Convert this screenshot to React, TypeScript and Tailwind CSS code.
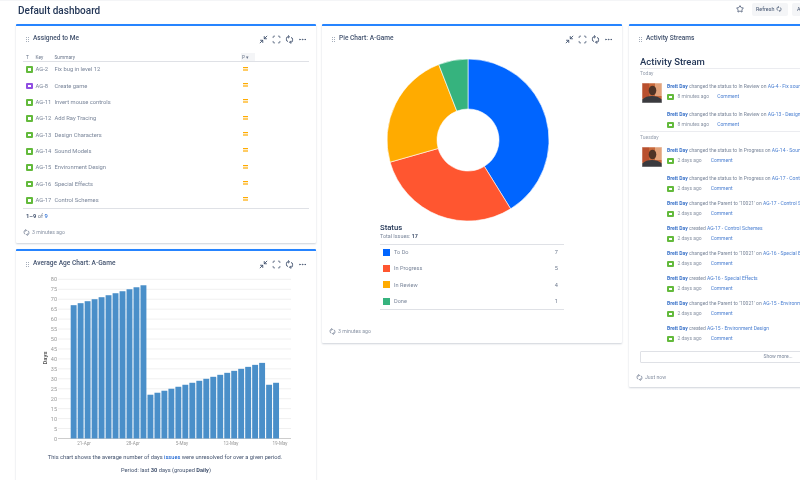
import { Minimize2, Scan, Ellipsis, Star } from "lucide-react";

const rows: [string, string, boolean?][] = [
  ["AG-2", "Fix bug in level 12"],
  ["AG-8", "Create game", true],
  ["AG-11", "Invert mouse controls"],
  ["AG-12", "Add Ray Tracing"],
  ["AG-13", "Design Characters"],
  ["AG-14", "Sound Models"],
  ["AG-15", "Environment Design"],
  ["AG-16", "Special Effects"],
  ["AG-17", "Control Schemes"],
];

const bars = [67, 68, 69, 70, 71, 72, 73, 74, 75, 76, 77, 22, 23, 24, 25, 26, 27, 28, 29, 30, 31, 32, 33, 34, 35, 36, 37, 38, 27, 28];

function Handle() {
  return (
    <span className="grid grid-cols-2 gap-[1px] w-[3px] mr-[4px]">
      {[0, 1, 2, 3, 4, 5].map((i) => (
        <span key={i} className="w-[1px] h-[1px] bg-[#a5adba]" />
      ))}
    </span>
  );
}

function Sync({ size = 9, className = "" }: { size?: number; className?: string }) {
  return (
    <svg width={size} height={size} viewBox="0 0 10 10" fill="none" stroke="currentColor" strokeWidth="1.1" className={className}>
      <path d="M4.6 2 H3.4 Q1.6 2 1.6 3.8 V5.2 Q1.6 7 3.2 7.2" />
      <path d="M3.4 0.4 L5 2 L3.4 3.6" />
      <path d="M5.4 8 H6.6 Q8.4 8 8.4 6.2 V4.8 Q8.4 3 6.8 2.8" />
      <path d="M6.6 9.6 L5 8 L6.6 6.4" />
    </svg>
  );
}

function Tools() {
  return (
    <div className="ml-auto flex items-center gap-[4px] text-[#42526e]">
      <Minimize2 size={9} strokeWidth={2.4} />
      <Scan size={9} strokeWidth={2} />
      <Sync />
      <Ellipsis size={9} strokeWidth={2} />
    </div>
  );
}

function CardTitle({ title, tools = true }: { title: string; tools?: boolean }) {
  return (
    <div className="flex items-center h-[10px] pl-[10px] pr-[9px] text-[6.6px] font-medium text-[#42526e]">
      <Handle />
      <span>{title}</span>
      {tools && <Tools />}
    </div>
  );
}

function Updated({ text }: { text: string }) {
  return (
    <div className="flex items-center gap-[2px] text-[5.2px] leading-[9px] text-[#8993a4]">
      <Sync size={7} className="text-[#6b778c]" />
      <span>{text}</span>
    </div>
  );
}

function IssueIcon({ purple = false }: { purple?: boolean }) {
  return (
    <span className={`w-[6.5px] h-[6.5px] rounded-[1px] flex items-center justify-center shrink-0 ${purple ? "bg-[#904ee2]" : "bg-[#63ba3c]"}`}>
      <span className="w-[2.5px] h-[2.5px] bg-white" />
    </span>
  );
}

function Priority() {
  return (
    <svg width="5" height="4" viewBox="0 0 5 4" className="block">
      <rect x="0" y="0" width="5" height="1.2" fill="#ffab00" />
      <rect x="0" y="2.4" width="5" height="1.2" fill="#ffab00" />
    </svg>
  );
}

function AssignedCard() {
  return (
    <section className="h-[219px] bg-white border-t-2 border-t-[#2684ff] rounded-[1px] shadow-[0_1px_2px_rgba(9,30,66,0.2)] pt-[8px]">
      <CardTitle title="Assigned to Me" />
      <div className="mx-[7px] mt-[10px] text-[5.8px] text-[#6b778c]">
        <div className="flex items-center h-[7.5px] border-b border-[#dfe1e6] pl-[3px] text-[4.8px]">
          <span className="w-[9.5px]">T</span>
          <span className="w-[19px]">Key</span>
          <span className="w-[186.5px]">Summary</span>
          <span className="bg-[#f4f5f7] w-[14px] h-[8px] pl-[1px] flex items-center">P ▾</span>
        </div>
        {rows.map(([key, summary, purple]) => (
          <div key={key} className="flex items-center h-[16.33px] pl-[3px]">
            <span className="w-[9.5px]">
              <IssueIcon purple={purple} />
            </span>
            <span className="w-[19px] text-[#7a869a]">{key}</span>
            <span className="w-[188.5px] text-[#7a869a]">{summary}</span>
            <span className="-mt-[2px]">
              <Priority />
            </span>
          </div>
        ))}
        <div className="border-t border-[#dfe1e6] pt-[3px] pl-[3px] h-[11px] text-[#6b778c]">
          <span className="font-bold text-[#42526e]">1–9</span> of <span className="text-[#0052cc]">9</span>
        </div>
      </div>
      <div className="pl-[7px] mt-[8.5px]">
        <Updated text="3 minutes ago" />
      </div>
    </section>
  );
}

function AgeChart() {
  const y = (v: number) => 438.5 - v * 1.99;
  const ticks = Array.from({ length: 17 }, (_, i) => i * 5);
  return (
    <svg width="300" height="183" viewBox="16 270 300 183" className="block">
      {ticks.map((t) => (
        <g key={t}>
          <line x1="58" x2="291" y1={y(t)} y2={y(t)} stroke={t === 0 ? "#c0c0c0" : "#f0f0f0"} strokeWidth={t === 0 ? 0.8 : 1} />
          <text x="57" y={y(t) + 2} textAnchor="end" fontSize="5.5" fill="#999999">{t}</text>
        </g>
      ))}
      {bars.map((b, i) => (
        <rect key={i} x={70.7 + i * 6.98} y={y(b)} width="5.9" height={b * 1.99} fill="#4a8fc9" />
      ))}
      {[["21-Apr", 84], ["28-Apr", 133], ["5-May", 182], ["12-May", 231], ["19-May", 280]].map(([l, x]) => (
        <text key={l} x={x} y="445" textAnchor="middle" fontSize="4.6" fill="#999999">{l}</text>
      ))}
      <text transform="translate(47,358) rotate(-90)" textAnchor="middle" fontSize="6" fontWeight="600" fill="#555555">Days</text>
    </svg>
  );
}

function AgeCard() {
  return (
    <section className="h-[240px] bg-white border-t-2 border-t-[#2684ff] rounded-[1px] shadow-[0_1px_2px_rgba(9,30,66,0.2)] pt-[8px]">
      <CardTitle title="Average Age Chart: A-Game" />
      <div className="mt-[1px]">
        <AgeChart />
      </div>
      <p className="text-center text-[5.7px] text-[#42526e] pr-[2px]">
        This chart shows the average number of days <span className="text-[#0052cc]">issues</span> were unresolved for over a given period.
      </p>
      <p className="text-center text-[5.7px] text-[#42526e] mt-[4px]">
        Period: last <b>30</b> days (grouped <b>Daily</b>)
      </p>
    </section>
  );
}

function Donut() {
  const cx = 82, cy = 82, R = 81, r = 31;
  const data: [number, string][] = [[7, "#0065ff"], [5, "#ff5630"], [4, "#ffab00"], [1, "#36b37e"]];
  let acc = 0;
  const pt = (rad: number, a: number) => `${cx + rad * Math.sin(a)} ${cy - rad * Math.cos(a)}`;
  return (
    <svg width="164" height="164" viewBox="0 0 164 164" className="block">
      {data.map(([v, c]) => {
        const a0 = (acc / 17) * Math.PI * 2;
        acc += v;
        const a1 = (acc / 17) * Math.PI * 2;
        const large = a1 - a0 > Math.PI ? 1 : 0;
        return (
          <path
            key={c}
            d={`M${pt(R, a0)} A${R} ${R} 0 ${large} 1 ${pt(R, a1)} L${pt(r, a1)} A${r} ${r} 0 ${large} 0 ${pt(r, a0)} Z`}
            fill={c}
            stroke="#ffffff"
            strokeWidth="0.6"
          />
        );
      })}
    </svg>
  );
}

function PieCard() {
  const legend: [string, number][] = [
    ["To Do", 7],
    ["In Progress", 5],
    ["In Review", 4],
    ["Done", 1],
  ];
  const swatch: Record<string, string> = {
    "To Do": "bg-[#0065ff]",
    "In Progress": "bg-[#ff5630]",
    "In Review": "bg-[#ffab00]",
    Done: "bg-[#36b37e]",
  };
  return (
    <section className="w-[300px] h-[319px] bg-white border-t-2 border-t-[#2684ff] rounded-[1px] shadow-[0_1px_2px_rgba(9,30,66,0.2)] pt-[8px]">
      <CardTitle title="Pie Chart: A-Game" />
      <div className="ml-[64px] mt-[14px]">
        <Donut />
      </div>
      <div className="ml-[58px] w-[184px] mt-[1px]">
        <div className="text-[7.7px] leading-[10px] font-medium text-[#253858]">Status</div>
        <div className="text-[5.4px] leading-[7px] text-[#7a869a] pb-[4px] border-b border-[#dfe1e6]">
          Total Issues: <b className="text-[#42526e]">17</b>
        </div>
        <div className="border-b border-[#dfe1e6] -mt-[1px]">
          {legend.map(([l, n]) => (
            <div key={l} className="flex items-center h-[16.33px] pl-[3px] pr-[6px] text-[5.6px] text-[#7a869a]">
              <span className={`w-[7px] h-[7px] mr-[4px] ${swatch[l]}`} />
              <span>{l}</span>
              <span className="ml-auto text-[#6b778c]">{n}</span>
            </div>
          ))}
        </div>
      </div>
      <div className="pl-[7px] mt-[17px]">
        <Updated text="3 minutes ago" />
      </div>
    </section>
  );
}

function Avatar() {
  return (
    <svg width="20" height="20" viewBox="0 0 20 20" className="shrink-0 block">
      <rect width="20" height="20" fill="#c8683a" />
      <rect x="0" y="0" width="7" height="15" fill="#b9502e" />
      <rect x="13" y="0" width="7" height="13" fill="#e2a27a" />
      <ellipse cx="10.5" cy="7.5" rx="3.8" ry="4.8" fill="#4e3326" />
      <path d="M0 20 V16.5 C3 14 6 13 10 13 C14 13 17 14 20 16.5 V20 Z" fill="#3a3a3e" />
      <rect x="0.25" y="0.25" width="19.5" height="19.5" fill="none" stroke="#ffffff" strokeOpacity="0.5" strokeWidth="0.5" />
    </svg>
  );
}

function Item({ parts, time = "2 days ago", gap = "ml-[9px]" }: { parts: [string, string]; time?: string; gap?: string }) {
  return (
    <div className="text-[5px] whitespace-nowrap pl-[27px]">
      <div className="h-[8px] leading-[8px] text-[#7a869a]">
        <span className="font-bold text-[#3b73c9]">Brett Day</span> {parts[0]} <span className="text-[#4a7fd1]">{parts[1]}</span>
      </div>
      <div className="flex items-center h-[8px] mt-[3px] text-[#8993a4]">
        <IssueIcon />
        <span className="ml-[4px]">{time}</span>
        <span className={`${gap} text-[#4a7fd1]`}>Comment</span>
      </div>
    </div>
  );
}

function ActivityCard() {
  return (
    <section className="w-[300px] h-[363px] shrink-0 bg-white border-t-2 border-t-[#2684ff] rounded-[1px] shadow-[0_1px_2px_rgba(9,30,66,0.2)] pt-[8px]">
      <CardTitle title="Activity Streams" tools={false} />
      <div className="px-[11px] mt-[10.5px] text-[#42526e]">
        <h2 className="text-[9.5px] leading-[13px] font-medium text-[#253858] border-b border-[#ebecf0]">Activity Stream</h2>
        <div className="text-[5px] leading-[9px] text-[#97a0af]">Today</div>
        <div className="relative mt-[4.5px] h-[49px]">
          <div className="absolute left-[2px] top-[1px]"><Avatar /></div>
          <div className="flex flex-col gap-[9px]">
            <Item parts={["changed the status to In Review on", "AG-4 - Fix sound bug"]} time="8 minutes ago" gap="ml-[8px]" />
            <Item parts={["changed the status to In Review on", "AG-13 - Design Characters"]} time="8 minutes ago" gap="ml-[8px]" />
          </div>
        </div>
        <div className="border-t border-[#ebecf0] text-[5px] leading-[10px] text-[#97a0af]">Tuesday</div>
        <div className="relative mt-[4px]">
          <div className="absolute left-[2px] top-[1px]"><Avatar /></div>
          <div className="flex flex-col gap-[6px]">
            <div className="flex flex-col gap-[9px]">
              <Item parts={["changed the status to In Progress on", "AG-14 - Sound Models"]} />
              <Item parts={["changed the status to In Progress on", "AG-17 - Control Schemes"]} />
            </div>
            <Item parts={["changed the Parent to '10021' on", "AG-17 - Control Schemes"]} />
            <Item parts={["created", "AG-17 - Control Schemes"]} />
            <Item parts={["changed the Parent to '10021' on", "AG-16 - Special Effects"]} />
            <Item parts={["created", "AG-16 - Special Effects"]} />
            <Item parts={["changed the Parent to '10021' on", "AG-15 - Environment Design"]} />
            <Item parts={["created", "AG-15 - Environment Design"]} />
          </div>
        </div>
        <button className="block w-[276px] h-[12px] mt-[8px] border border-[#dfe1e6] rounded-[1px] text-[5px] text-[#7a869a] text-center">Show more...</button>
      </div>
      <div className="pl-[7px] mt-[9.5px]">
        <Updated text="Just now" />
      </div>
    </section>
  );
}

export default function App() {
  return (
    <div
      className="w-[800px] h-[480px] overflow-hidden bg-white border-t border-[#f4f5f7] blur-[0.4px]"
      style={{ fontFamily: 'Roboto, "Noto Sans", sans-serif' }}
    >
      <header className="flex items-center h-[23px] pl-[18px]">
        <h1 className="text-[10px] font-medium text-[#253858] -mt-[5px]">Default dashboard</h1>
        <div className="ml-auto flex items-center -mt-[7px] -mr-[20px] text-[5.4px] text-[#42526e]">
          <Star size={8} strokeWidth={2.4} className="mr-[8px]" />
          <span className="flex items-center gap-[2px] h-[13px] pl-[4px] bg-[#f4f5f7] rounded-[2px] w-[36px]">
            Refresh <Sync size={6} />
          </span>
          <span className="flex items-center h-[13px] pl-[5px] ml-[4px] bg-[#f4f5f7] rounded-[2px] w-[28px]">Add</span>
        </div>
      </header>
      <main className="flex items-start gap-[6px] pl-[16px]">
        <div className="w-[300px] shrink-0 flex flex-col gap-[6px]">
          <AssignedCard />
          <AgeCard />
        </div>
        <div className="shrink-0">
          <PieCard />
        </div>
        <div className="ml-[1px]">
          <ActivityCard />
        </div>
      </main>
    </div>
  );
}
